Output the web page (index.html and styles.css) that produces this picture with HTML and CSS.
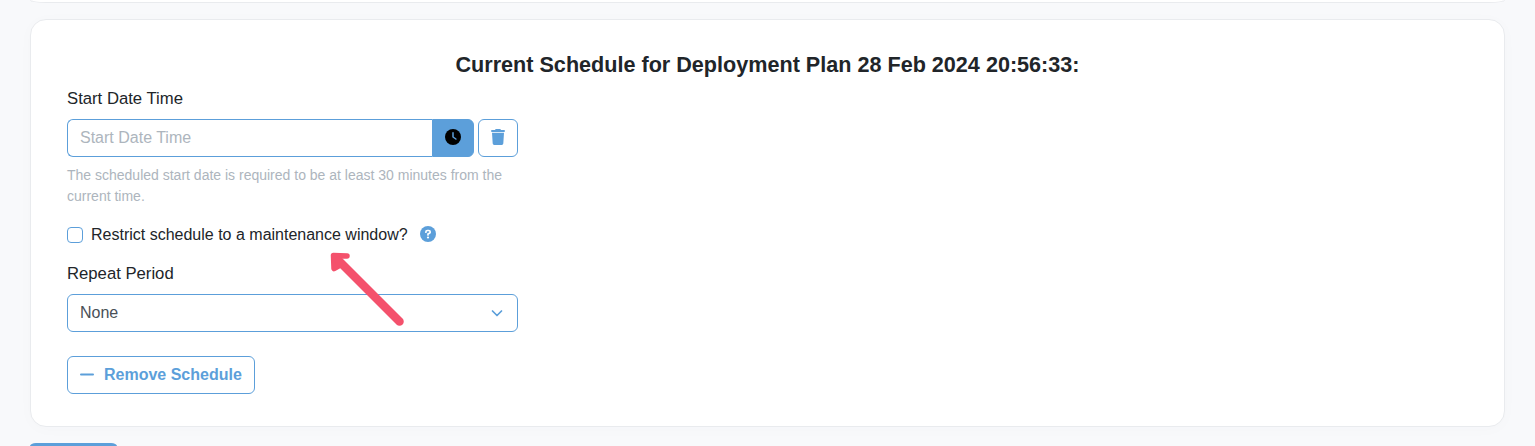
FILE: index.html
```
<!DOCTYPE html>
<html lang="en">
<head>
<meta charset="utf-8">
<title>Deployment Schedule</title>
<link rel="stylesheet" href="styles.css">
</head>
<body>
<main class="page">
  <section class="card card-previous"></section>
  <section class="card schedule">
    <h2 class="title"><span>Current Schedule for Deployment Plan 28 Feb 2024 20:56:33:</span></h2>
    <form class="form">
      <label class="label" for="start">Start Date Time</label>
      <div class="date-row">
        <div class="input-group">
          <input class="input" id="start" type="text" placeholder="Start Date Time">
          <button class="clock" type="button" aria-label="Pick time">
            <svg width="16" height="16" viewBox="0 0 16 16"><circle cx="8" cy="8" r="8" fill="#000"/><path d="M8 3.700V8l2.900 2" fill="none" stroke="#5c9fda" stroke-width="1.500" stroke-linecap="round" stroke-linejoin="round"/></svg>
          </button>
        </div>
        <button class="trash" type="button" aria-label="Clear date">
          <svg width="14" height="16" viewBox="0 0 14 16"><path d="M4.200.600A1 1 0 0 1 5.100 0h3.800a1 1 0 0 1 .9.600L10 1h3a1 1 0 0 1 1 1 1 1 0 0 1-1 1H1a1 1 0 0 1-1-1 1 1 0 0 1 1-1h3zM1 3.800h12l-.7 10.800a1.500 1.500 0 0 1-1.500 1.400H3.200a1.500 1.500 0 0 1-1.500-1.400z" fill="#5c9fda"/></svg>
        </button>
      </div>
      <p class="help">The scheduled start date is required to be at least 30 minutes from the current time.</p>
      <div class="check-row">
        <input class="checkbox" id="restrict" type="checkbox">
        <label class="check-label" for="restrict">Restrict schedule to a maintenance window?</label>
        <svg class="question" width="16" height="16" viewBox="0 0 16 16"><circle cx="8" cy="8" r="8" fill="#5c9fda"/><path d="M5.900 6.200V6c0-.9.600-1.500 1.500-1.500h1.200c.9 0 1.600.6 1.600 1.500 0 .6-.3 1-.8 1.300L8 8.100v.8" fill="none" stroke="#fff" stroke-width="1.700" stroke-linecap="round"/><circle cx="8" cy="11.500" r="1.100" fill="#fff"/></svg>
      </div>
      <label class="label">Repeat Period</label>
      <div class="select" role="combobox" aria-expanded="false">
        <span>None</span>
        <svg width="16" height="12" viewBox="0 0 16 12"><path d="M3.500 4l4.500 4.500 4.500-4.500" fill="none" stroke="#5c9fda" stroke-width="1.700" stroke-linecap="round" stroke-linejoin="round"/></svg>
      </div>
      <button class="remove" type="button">
        <svg width="14" height="16" viewBox="0 0 14 16"><path d="M1 7.500h12" stroke="#5c9fda" stroke-width="2" stroke-linecap="round"/></svg>
        <span>Remove Schedule</span>
      </button>
    </form>
    <svg class="arrow" width="80" height="80" viewBox="325 248 80 80"><path d="M334 268.500L333.500 255.500L347 256L334 256L342 264Z" fill="#f4516c" stroke="#f4516c" stroke-linejoin="round" stroke-width="5.500"/><path d="M399.500 321.500L339 261" stroke="#f4516c" stroke-width="8.500" stroke-linecap="round"/></svg>
  </section>
  <button class="save" type="button" aria-label="Save"></button>
</main>
</body>
</html>
```
FILE: styles.css
```
* { box-sizing: border-box; }
html { overflow: hidden; }
body {
  margin: 0;
  height: 446px;
  overflow: hidden;
  background: #f8f9fb;
  color: #212529;
  font: 16px/24px "Liberation Sans", Arial, sans-serif;
}
.page {
  display: flex;
  flex-direction: column;
  align-items: flex-start;
  height: 446px;
  overflow: hidden;
  padding: 0 30px;
}
.card {
  width: 100%;
  flex: none;
  background: #fff;
  border: 1px solid #e9ebee;
  border-radius: 16px;
  box-shadow: 0 2px 16px rgba(30, 50, 80, 0.02);
}
.card-previous {
  height: 3px;
  margin-bottom: 16px;
  border-top: 0;
  border-radius: 0 0 16px 16px / 0 0 3px 3px;
}
.schedule {
  position: relative;
  height: 408px;
  padding: 32px 36px;
}
.title {
  margin: 0 0 8px;
  font-size: 21.6px;
  line-height: 26px;
  text-align: center;
}
.form { width: 451px; }
.label {
  display: block;
  padding-top: 1px;
  margin-bottom: 8px;
  font-size: 16.7px;
}
.date-row { display: flex; gap: 4px; }
.input-group { display: flex; flex: 1; }
.input {
  flex: 1;
  min-width: 0;
  height: 38px;
  padding: 0 12px 1px;
  border: 1px solid #5c9fda;
  border-right: 0;
  border-radius: 6px 0 0 6px;
  background: #fff;
  font: inherit;
}
.input::placeholder { color: #adb5bd; opacity: 1; }
.clock, .trash {
  display: flex;
  align-items: center;
  justify-content: center;
  height: 38px;
  padding: 0 0 2px;
  border: 1px solid #5c9fda;
}
.clock {
  width: 42px;
  border-radius: 0 6px 6px 0;
  background: #5c9fda;
}
.trash {
  width: 40px;
  border-radius: 6px;
  background: #fff;
}
.help {
  margin: 8px 0 15px;
  color: #adb5bd;
  font-size: 14px;
  line-height: 21px;
}
.check-row {
  display: flex;
  align-items: center;
  height: 24px;
  margin-bottom: 15px;
}
.checkbox {
  appearance: none;
  width: 16px;
  height: 16px;
  margin: 2px 8px 0 0;
  border: 1px solid #5c9fda;
  border-radius: 4px;
  background: #fff;
}
.check-label { padding-top: 2px; }
.question { margin-left: 12px; }
.select {
  display: flex;
  align-items: center;
  justify-content: space-between;
  height: 38px;
  margin-bottom: 24px;
  padding: 0 12px 1px;
  border: 1px solid #5c9fda;
  border-radius: 6px;
  color: #495057;
}
.remove {
  display: flex;
  align-items: center;
  gap: 10px;
  height: 38px;
  padding: 0 12px 1px;
  border: 1px solid #5c9fda;
  border-radius: 6px;
  background: #fff;
  color: #5c9fda;
  font: bold 16px/24px "Liberation Sans", Arial, sans-serif;
}
.arrow {
  position: absolute;
  left: 294px;
  top: 228px;
}
.save {
  flex: none;
  width: 87px;
  height: 3px;
  margin-top: 16px;
  border: 0;
  border-radius: 6px 6px 0 0 / 3px 3px 0 0;
  background: #5c9fda;
}
```
